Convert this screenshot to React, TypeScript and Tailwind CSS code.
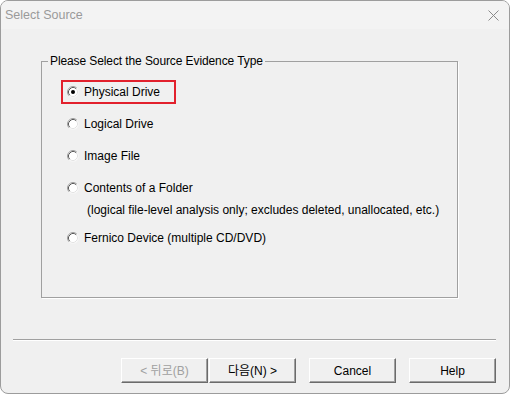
import React from "react";

const font = { fontFamily: '"Liberation Sans", Arial, sans-serif' };
const krFont = { fontFamily: '"Liberation Sans", "Noto Sans CJK KR", sans-serif' };

function Radio({ checked }: { checked?: boolean }) {
  return (
    <svg width="12" height="12" viewBox="0 0 12 12" className="shrink-0">
      <circle cx="6" cy="6" r="5.5" fill="#ffffff" />
      <path d="M2.11 9.89 A5.5 5.5 0 0 1 9.89 2.11" fill="none" stroke="#a0a0a0" strokeWidth="1" />
      <path d="M9.89 2.11 A5.5 5.5 0 0 1 2.11 9.89" fill="none" stroke="#f4f4f4" strokeWidth="1" />
      <path d="M2.82 9.18 A4.5 4.5 0 0 1 9.18 2.82" fill="none" stroke="#5a5a5a" strokeWidth="1" />
      <path d="M9.18 2.82 A4.5 4.5 0 0 1 2.82 9.18" fill="none" stroke="#e3e3e3" strokeWidth="1" />
      {checked && <circle cx="6" cy="6" r="2" fill="#000000" />}
    </svg>
  );
}

function Option({ label, checked }: { label: string; checked?: boolean }) {
  return (
    <div className="flex items-center gap-[5px] h-[20px] text-[12px] text-black">
      <Radio checked={checked} />
      <span>{label}</span>
    </div>
  );
}

function Button({ label, disabled, kr }: { label: string; disabled?: boolean; kr?: boolean }) {
  return (
    <div
      className={`w-[87px] h-[25px] flex items-center justify-center text-[12px] bg-[#f0f0f0] border border-t-white border-l-white border-r-[#6b6b6b] border-b-[#6b6b6b] shadow-[inset_-1px_-1px_0_#a0a0a0] ${
        disabled ? "text-[#a0a0a0]" : "text-black"
      }`}
      style={kr ? krFont : font}
    >
      {label}
    </div>
  );
}

export default function App() {
  return (
    <div
      className="w-[510px] h-[394px] bg-[#f0f0f0] border border-[#9c9c9c] rounded-[8px] overflow-hidden flex flex-col"
      style={font}
    >
      {/* title bar */}
      <div className="h-[28px] flex items-center justify-between pl-[4px] pr-[10px] bg-[#f3f3f3]">
        <span className="text-[12.5px] text-[#9a9a9a]">Select Source</span>
        <svg width="11" height="11" viewBox="0 0 11 11">
          <path d="M0.5 0.5 L10.5 10.5 M10.5 0.5 L0.5 10.5" stroke="#8a8a8a" strokeWidth="1" />
        </svg>
      </div>

      {/* group box */}
      <div className="relative ml-[40px] mt-[32px] w-[417px] h-[237px] border border-[#a0a0a0] shadow-[1px_1px_0_#ffffff]">
        <span className="absolute left-[6px] -top-[9px] px-[2px] bg-[#f0f0f0] text-[12px] leading-[16px] text-black tracking-[-0.1px]">
          Please Select the Source Evidence Type
        </span>
        <div className="flex flex-col pl-[25px] pt-[18px]">
          <div className="-ml-[6px] w-[115px] h-[24px] border-2 border-[#e2212d] pl-[4px] flex items-center">
            <Option label="Physical Drive" checked />
          </div>
          <div className="mt-[10px]">
            <Option label="Logical Drive" />
          </div>
          <div className="mt-[12px]">
            <Option label="Image File" />
          </div>
          <div className="mt-[12px]">
            <Option label="Contents of a Folder" />
          </div>
          <div className="mt-[4px] pl-[20px] h-[16px] leading-[16px] text-[12px] text-black">
            (logical file-level analysis only; excludes deleted, unallocated, etc.)
          </div>
          <div className="mt-[10px]">
            <Option label="Fernico Device (multiple CD/DVD)" />
          </div>
        </div>
      </div>

      {/* separator */}
      <div className="ml-[12px] mt-[41px] w-[483px] border-t border-[#a0a0a0] border-b border-b-white" />

      {/* buttons */}
      <div className="flex mt-[17px] ml-[120px]">
        <Button label="< 뒤로(B)" disabled kr />
        <div className="ml-[1px]">
          <Button label="다음(N) >" kr />
        </div>
        <div className="ml-[13px]">
          <Button label="Cancel" />
        </div>
        <div className="ml-[13px]">
          <Button label="Help" />
        </div>
      </div>
    </div>
  );
}
